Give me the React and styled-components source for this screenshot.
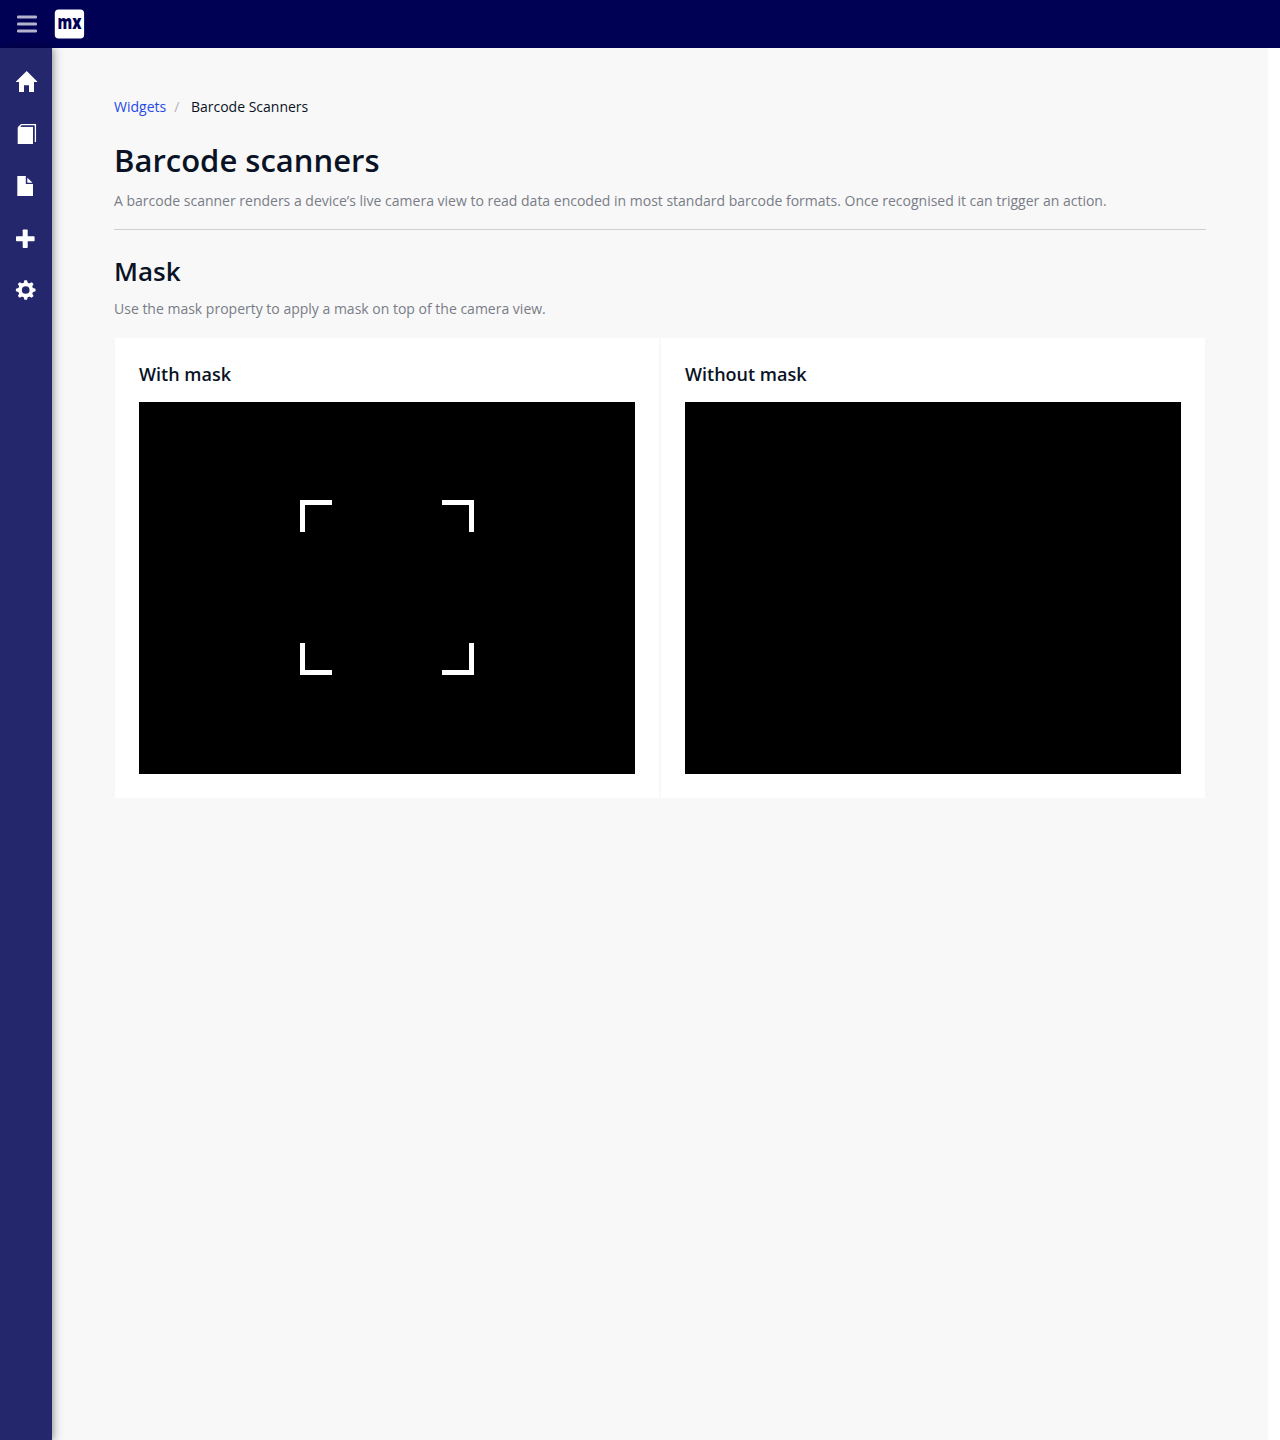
import React from 'react';
import styled, { createGlobalStyle } from 'styled-components';

const GlobalStyle = createGlobalStyle`
  * { box-sizing: border-box; }
  body {
    margin: 0;
    background: #fff;
    color: #0a1325;
    font-family: "Open Sans", sans-serif;
    font-size: 14px;
    line-height: 20px;
  }
`;

const Page = styled.div`
  display: flex;
  flex-direction: column;
  height: 1440px;
  overflow: hidden;
`;

const Topbar = styled.header`
  display: flex;
  align-items: center;
  flex: none;
  height: 48px;
  padding-left: 17px;
  gap: 17px;
  background: #000055;
`;

const MenuToggle = styled.button`
  display: flex;
  width: 20px;
  padding: 0;
  border: 0;
  background: none;
  color: #b3b3cc;
`;

const LogoMark = styled.svg`
  display: block;
  width: 31px;
  height: 48px;
  overflow: visible;
`;

const LogoText = styled.text`
  fill: #000055;
  font-family: "Open Sans", sans-serif;
  font-size: 19px;
  font-weight: 800;
`;

const Body = styled.div`
  display: flex;
  flex: 1;
`;

const Sidebar = styled.nav`
  display: flex;
  flex-direction: column;
  align-items: center;
  flex: none;
  width: 52px;
  padding-top: 8px;
  background: #24276c;
  box-shadow: 2px 0 4px rgba(0, 0, 0, 0.14), 2px 0 10px rgba(0, 0, 0, 0.26);
  z-index: 1;
`;

const NavItem = styled.a`
  display: flex;
  height: 52px;
  width: 52px;
  color: #fff;
`;

const Content = styled.main`
  width: 1216px;
  padding: 49px 62px 0;
  background: #f8f8f8;
`;

const Breadcrumb = styled.div`
  display: flex;
`;

const Crumb = styled.a`
  color: #264ae5;
`;

const Separator = styled.span`
  padding: 0 11.6px 0 8px;
  color: #b2b4b9;
`;

const Title = styled.h1`
  margin: 21px 0 0;
  font-size: 31px;
  font-weight: 600;
  line-height: 44px;
`;

const Subtitle = styled.h2`
  margin: 23px 0 0;
  font-size: 26px;
  font-weight: 600;
  line-height: 36px;
`;

const Description = styled.p`
  margin: ${(p) => p.$gap}px 0 0;
  color: #787d87;
`;

const Divider = styled.hr`
  height: 1px;
  margin: 18px 0 0;
  border: 0;
  background: #ced0d3;
`;

const Cards = styled.div`
  display: grid;
  grid-template-columns: 1fr 1fr;
  gap: 2px;
  margin: 19px 1px 0;
`;

const Card = styled.section`
  height: 460px;
  padding: 24px;
  background: #fff;
`;

const CardTitle = styled.h3`
  margin: 0 0 16px;
  font-size: 18px;
  font-weight: 600;
  line-height: 24px;
`;

const Camera = styled.div`
  display: flex;
  align-items: center;
  justify-content: center;
  height: 372px;
  padding-bottom: 1px;
  background: #000;
`;

const Mask = styled.div`
  display: grid;
  grid-template-columns: 32px 32px;
  grid-template-rows: 32px 32px;
  justify-content: space-between;
  align-content: space-between;
  width: 174px;
  height: 175px;
`;

const Corner = styled.span`
  border: 0 solid #fff;
  border-${(p) => p.$v}-width: 5px;
  border-${(p) => p.$h}-width: 5px;
`;

const Icon = ({ children }) => (
  <svg width="52" height="52" viewBox="0 0 52 52" fill="currentColor">{children}</svg>
);

const MenuIcon = () => (
  <svg width="20" height="48" viewBox="0 0 20 48" fill="currentColor">
    <rect y="15.4" width="20" height="3.2" rx="1.3" />
    <rect y="22.4" width="20" height="3.2" rx="1.3" />
    <rect y="29.4" width="20" height="3.2" rx="1.3" />
  </svg>
);

const Logo = () => (
  <LogoMark viewBox="0 0 31 48">
    <rect x="0.8" y="9.4" width="29.3" height="29.2" rx="3.8" fill="#fff" />
    <LogoText x="3.5" y="29.3" textLength="24" lengthAdjust="spacingAndGlyphs">mx</LogoText>
  </LogoMark>
);

const HomeIcon = () => (
  <Icon><path d="M26.7 15 37.2 25.4V26H34V36H29V29.3H24V36H19V26H16V25.4Z" /></Icon>
);

const CopyIcon = () => (
  <Icon>
    <path d="M17.7 19.6 19 18.8H33V36H17.7Z" />
    <path d="M18.6 19.3 21.4 16.8H35.3V34" fill="none" stroke="currentColor" strokeWidth="1.5" />
    <path d="M21.2 18.2H33.8V34" fill="none" stroke="#24276c" strokeWidth="1.2" />
  </Icon>
);

const FileIcon = () => (
  <Icon>
    <path d="M17.3 16H25.8V24H33V36H17.3Z" />
    <path d="M27.3 17.8 32.6 22.8H27.3Z" />
  </Icon>
);

const PlusIcon = () => (
  <Icon>
    <rect x="16" y="24.2" width="18.6" height="5" rx="0.8" />
    <rect x="22.7" y="17.5" width="5" height="18.5" rx="0.8" />
  </Icon>
);

const GearIcon = () => (
  <Icon>
    <g transform="translate(25.7 26)">
      <circle r="5.7" fill="none" stroke="currentColor" strokeWidth="3.7" />
      {[0, 45, 90, 135, 180, 225, 270, 315].map((a) => (
        <path key={a} transform={`rotate(${a})`} d="M-2.2-6.6-1.3-9.8H1.3L2.2-6.6Z" />
      ))}
    </g>
  </Icon>
);

const navIcons = [HomeIcon, CopyIcon, FileIcon, PlusIcon, GearIcon];

export default function App() {
  return (
    <>
      <GlobalStyle />
      <Page>
        <Topbar>
          <MenuToggle aria-label="Toggle menu"><MenuIcon /></MenuToggle>
          <Logo />
        </Topbar>
        <Body>
          <Sidebar>
            {navIcons.map((NavIcon, i) => <NavItem key={i}><NavIcon /></NavItem>)}
          </Sidebar>
          <Content>
            <Breadcrumb>
              <Crumb>Widgets</Crumb>
              <Separator>/</Separator>
              <span>Barcode Scanners</span>
            </Breadcrumb>
            <Title>Barcode scanners</Title>
            <Description $gap={9}>
              A barcode scanner renders a device’s live camera view to read data encoded in most standard barcode formats. Once recognised it can trigger an action.
            </Description>
            <Divider />
            <Subtitle>Mask</Subtitle>
            <Description $gap={10}>Use the mask property to apply a mask on top of the camera view.</Description>
            <Cards>
              <Card>
                <CardTitle>With mask</CardTitle>
                <Camera>
                  <Mask>
                    <Corner $v="top" $h="left" />
                    <Corner $v="top" $h="right" />
                    <Corner $v="bottom" $h="left" />
                    <Corner $v="bottom" $h="right" />
                  </Mask>
                </Camera>
              </Card>
              <Card>
                <CardTitle>Without mask</CardTitle>
                <Camera />
              </Card>
            </Cards>
          </Content>
        </Body>
      </Page>
    </>
  );
}
